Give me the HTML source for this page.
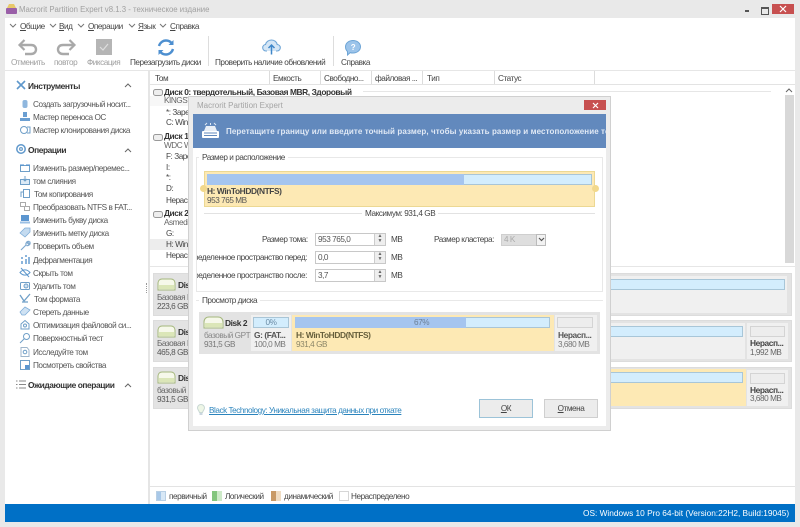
<!DOCTYPE html>
<html lang="ru"><head><meta charset="utf-8"><title>Macrorit Partition Expert</title>
<style>
html,body{margin:0;padding:0;width:800px;height:527px;overflow:hidden;background:#e9e9e9}
body{position:relative;font:8.2px/12px "Liberation Sans",sans-serif;letter-spacing:-.45px;color:#444}
.a,.t,.s{position:absolute}
.t{white-space:nowrap;height:12px;margin-top:1px}
.b{font-weight:bold;color:#333;font-size:8.4px;letter-spacing:-.42px}
.g{color:#888}
.li{color:#555}
.h{font-weight:bold;color:#333;font-size:8.4px;letter-spacing:-.42px}
svg{position:absolute;overflow:visible}
.ic{fill:none;stroke:#6f9fc8;stroke-width:1}
.col{position:absolute;top:71px;width:1px;height:13px;background:#dcdcdc}
.inp{position:absolute;left:315px;width:71px;height:13px;border:1px solid #c8c8c8;background:#fff;box-sizing:border-box;line-height:11px;padding-left:2px;color:#555}
.spin{position:absolute;right:0;top:0;width:10px;height:11px;background:#eee;border-left:1px solid #ccc;color:#666;font-size:5px;line-height:5px;text-align:center;letter-spacing:0}
.btn{position:absolute;top:399px;height:19px;box-sizing:border-box;background:#ececec;text-align:center;line-height:17px;color:#444}
.card{position:absolute;background:#e3e3e3;border:1px solid #dcdcdc;box-sizing:border-box}
u{text-decoration:underline}
</style></head><body>

<!-- main white -->
<div class="a" style="left:5px;top:18px;width:790px;height:486px;background:#fff"></div>
<!-- title bar -->
<svg style="left:6px;top:4px" width="11" height="10"><path d="M1 4L3 0H8L10 4Z" fill="#e8c86a"/><rect x="0" y="4" width="11" height="6" rx="1" fill="#9a5fa8"/></svg>
<div class="t" style="left:19px;top:3px;color:#a0a0a0;font-size:7.8px;letter-spacing:0">Macrorit Partition Expert v8.1.3 - техническое издание</div>
<div class="a" style="left:745px;top:10px;width:4px;height:2px;background:#555"></div>
<div class="a" style="left:761px;top:7px;width:6px;height:5px;border:1px solid #555;border-top-width:2px;box-sizing:content-box"></div>
<div class="a" style="left:772px;top:4px;width:22px;height:10px;background:#c75050"></div>
<svg style="left:780px;top:6px" width="6" height="6"><path d="M0 0L6 6M6 0L0 6" stroke="#fff" stroke-width="1.2"/></svg>

<!-- menu -->
<svg style="left:10px;top:24px" width="160" height="5" fill="none" stroke="#777"><path d="M0 0L3 3L6 0M40 0L43 3L46 0M68 0L71 3L74 0M119 0L122 3L125 0M150 0L153 3L156 0"/></svg>
<div class="t" style="left:20px;top:20px"><u>О</u>бщие</div>
<div class="t" style="left:59px;top:20px"><u>В</u>ид</div>
<div class="t" style="left:88px;top:20px"><u>О</u>перации</div>
<div class="t" style="left:138px;top:20px"><u>Я</u>зык</div>
<div class="t" style="left:170px;top:20px"><u>С</u>правка</div>

<!-- toolbar -->
<svg style="left:18px;top:39px" width="20" height="17" fill="none" stroke="#a9a9a9" stroke-width="2.4"><path d="M2 6H13C16.500 6 18 8 18 10.500C18 13 16 15 13 15H7"/><path d="M6.500 1L1.500 6L6.500 11" stroke-width="2.2"/></svg>
<svg style="left:56px;top:39px" width="20" height="17" fill="none" stroke="#a9a9a9" stroke-width="2.4"><path d="M18 6H7C3.500 6 2 8 2 10.500C2 13 4 15 7 15H13"/><path d="M13.500 1L18.500 6L13.500 11" stroke-width="2.2"/></svg>
<svg style="left:96px;top:39px" width="16" height="16"><rect width="16" height="16" fill="#b5b5b5"/><path d="M4 8L7 11L12 5" fill="none" stroke="#dedede" stroke-width="1.2"/></svg>
<svg style="left:157px;top:39px" width="18" height="17" fill="none" stroke="#4d8fd0" stroke-width="2.4"><path d="M2 7C3 3.500 6 1.500 9 1.500C11.500 1.500 13.500 2.500 15 4.500"/><path d="M16 10C15 13.500 12 15.500 9 15.500C6.500 15.500 4.500 14.500 3 12.500"/><path d="M16.500 1V6H11.500Z" fill="#4d8fd0" stroke="none"/><path d="M1.500 16V11H6.500Z" fill="#4d8fd0" stroke="none"/></svg>
<svg style="left:262px;top:39px" width="19" height="16"><path d="M5 12H4C2 12 .7 10.500 .7 8.700C.7 7 2 5.700 3.500 5.500C4 3 6.500 1 9.500 1C12.500 1 14.800 3 15.200 5.500C17 5.700 18.300 7 18.300 8.700C18.300 10.500 17 12 15 12H14" fill="#d4e6f6" stroke="#6ea5d6" stroke-width="1.1"/><path d="M9.500 15.500V6.500M6.500 9L9.500 6L12.500 9" fill="none" stroke="#3f87c9" stroke-width="1.500"/></svg>
<svg style="left:345px;top:40px" width="16" height="16"><path d="M8 .5C12 .5 15.500 3 15.500 6.800C15.500 10.500 12 13 8 13C7 13 6 12.900 5.200 12.600L2.500 15V11.500C1.200 10.400 .5 8.700 .5 6.800C.5 3 4 .5 8 .5Z" fill="#9cc4ea" stroke="#6ea5d6"/><text x="8" y="10" text-anchor="middle" font-size="8" font-family="Liberation Sans" fill="#fff" font-weight="bold">?</text></svg>
<div class="t g" style="left:11px;top:56px;color:#9e9e9e">Отменить</div>
<div class="t g" style="left:54px;top:56px;color:#9e9e9e">повтор</div>
<div class="t g" style="left:87px;top:56px;color:#9e9e9e">Фиксация</div>
<div class="t" style="left:130px;top:56px">Перезагрузить диски</div>
<div class="a" style="left:208px;top:36px;width:1px;height:30px;background:#ddd"></div>
<div class="t" style="left:215px;top:56px">Проверить наличие обновлений</div>
<div class="a" style="left:333px;top:36px;width:1px;height:30px;background:#ddd"></div>
<div class="t" style="left:341px;top:56px">Справка</div>

<!-- sidebar/main split -->
<div class="a" style="left:5px;top:70px;width:790px;height:1px;background:#e6e6e6"></div>
<div class="a" style="left:148px;top:70px;width:2px;height:434px;background:#e5e5e5"></div>
<div class="a" style="left:146px;top:283px;width:1px;height:10px;border-left:1px dotted #999"></div>

<!-- sidebar -->
<svg class="ic" style="left:16px;top:80px" width="10" height="10"><path d="M1 1L9 9M9 1L1 9" stroke="#5f98cc" stroke-width="1.6"/></svg>
<div class="t h" style="left:28px;top:79px">Инструменты</div>
<svg style="left:125px;top:83px" width="6" height="4" fill="none" stroke="#666"><path d="M0 4L3 1L6 4"/></svg>
<svg style="left:20px;top:99px" width="10" height="10"><rect x="2.500" y="1" width="5" height="8" rx="2" fill="#8fb7de"/></svg>
<div class="t li" style="left:33px;top:98px">Создать загрузочный носит...</div>
<svg style="left:20px;top:112px" width="10" height="10"><rect x="3" y="0" width="4" height="5" fill="#6b9fd2"/><rect x="0" y="6" width="10" height="3" fill="#6b9fd2"/></svg>
<div class="t li" style="left:33px;top:111px">Мастер переноса ОС</div>
<svg class="ic" style="left:20px;top:125px" width="10" height="10"><circle cx="4" cy="5" r="3.500"/><path d="M7 2H10V8H7"/></svg>
<div class="t li" style="left:33px;top:124px">Мастер клонирования диска</div>

<svg class="ic" style="left:16px;top:144px" width="10" height="10"><circle cx="5" cy="5" r="4.200" stroke="#5f98cc" stroke-width="1.500"/><circle cx="5" cy="5" r="1.500" fill="#bcd6ee"/></svg>
<div class="t h" style="left:28px;top:143px">Операции</div>
<svg style="left:125px;top:148px" width="6" height="4" fill="none" stroke="#666"><path d="M0 4L3 1L6 4"/></svg>
<svg class="ic" style="left:20px;top:163px" width="10" height="9"><rect x=".5" y="2.500" width="9" height="6"/><path d="M0 2H4M6 2H10" stroke="#4d8fd0"/></svg>
<div class="t li" style="left:33px;top:162px">Изменить размер/перемес...</div>
<svg class="ic" style="left:20px;top:176px" width="10" height="9"><rect x=".5" y="3.500" width="9" height="5" fill="#dceaf6"/><path d="M5 0V5M3 3L5 5L7 3"/></svg>
<div class="t li" style="left:33px;top:175px">том слияния</div>
<svg class="ic" style="left:20px;top:189px" width="10" height="9"><rect x="3.500" y=".5" width="6" height="8"/><path d="M1 8V3H3"/></svg>
<div class="t li" style="left:34px;top:188px">Том копирования</div>
<svg class="ic" style="left:20px;top:202px" width="10" height="9" stroke="#aaa"><rect x=".5" y=".5" width="5" height="4" style="stroke:#aaa"/><rect x="4.500" y="4.500" width="5" height="4" style="stroke:#aaa"/></svg>
<div class="t li" style="left:33px;top:201px">Преобразовать NTFS в FAT...</div>
<svg style="left:20px;top:215px" width="10" height="9"><rect x="1" y="0" width="8" height="6" fill="#5c96d0"/><rect x="0" y="6.500" width="10" height="2" fill="#9cc0e4"/></svg>
<div class="t li" style="left:33px;top:214px">Изменить букву диска</div>
<svg style="left:20px;top:228px" width="10" height="9"><path d="M0 5L5 0H10V4L5 9Z" fill="#c4dbf0" stroke="#7fadd8" stroke-width=".8"/></svg>
<div class="t li" style="left:33px;top:227px">Изменить метку диска</div>
<svg class="ic" style="left:20px;top:241px" width="10" height="9"><path d="M1 9L6 4C5.500 2 7 0 9 .5L7.500 2L8.500 3L10 1.500C10.500 3.500 8.500 5 6.500 4.500" stroke="#7fa9cf" stroke-width="1.200"/></svg>
<div class="t li" style="left:33px;top:240px">Проверить объем</div>
<svg style="left:20px;top:255px" width="10" height="9"><path d="M1 2H3V4H1ZM5 0H7V2H5ZM1 6H3V9H1ZM5 4H7V9H5ZM8 2H10V9H8Z" fill="#8cb5dc"/></svg>
<div class="t li" style="left:33px;top:254px">Дефрагментация</div>
<svg class="ic" style="left:20px;top:268px" width="10" height="9"><path d="M0 4.500C3 1 7 1 10 4.500C7 8 3 8 0 4.500Z" stroke="#5f98cc"/><path d="M1 0L9 9" stroke="#5f98cc"/></svg>
<div class="t li" style="left:33px;top:267px">Скрыть том</div>
<svg class="ic" style="left:20px;top:281px" width="10" height="9"><rect x=".5" y="1.500" width="9" height="7" rx="1"/><circle cx="6" cy="5" r="2" fill="#cfe2f3"/></svg>
<div class="t li" style="left:33px;top:280px">Удалить том</div>
<svg class="ic" style="left:20px;top:294px" width="10" height="9"><path d="M0 1L4 7L10 0M2 8H8" stroke="#6f9fc8" stroke-width="1.300"/></svg>
<div class="t li" style="left:34px;top:293px">Том формата</div>
<svg style="left:20px;top:307px" width="10" height="9"><path d="M0 5L5 0L10 3L5 8H2Z" fill="#cfe2f3" stroke="#7fadd8" stroke-width=".8"/></svg>
<div class="t li" style="left:33px;top:306px">Стереть данные</div>
<svg class="ic" style="left:20px;top:320px" width="10" height="9"><path d="M1 9V4L5 .5L9 4V9Z"/><circle cx="5" cy="5.500" r="1.500"/></svg>
<div class="t li" style="left:33px;top:319px">Оптимизация файловой си...</div>
<svg class="ic" style="left:20px;top:333px" width="10" height="10"><circle cx="6.500" cy="3.500" r="3"/><path d="M4.500 5.500L0 10"/></svg>
<div class="t li" style="left:33px;top:332px">Поверхностный тест</div>
<svg class="ic" style="left:20px;top:347px" width="10" height="10" stroke="#aaa"><path d="M1 .5H7L9 3V9.500H1Z" style="stroke:#9fb6cc"/><circle cx="5" cy="5" r="1.800"/></svg>
<div class="t li" style="left:33px;top:346px">Исследуйте том</div>
<svg class="ic" style="left:20px;top:360px" width="10" height="10"><rect x=".5" y=".5" width="9" height="9"/><rect x="5" y="5" width="4" height="4" fill="#5c96d0" stroke="none"/></svg>
<div class="t li" style="left:33px;top:359px">Посмотреть свойства</div>
<svg style="left:16px;top:380px" width="10" height="9" fill="none" stroke="#888"><path d="M3 1H10M3 4.500H10M3 8H10M0 1H1.500M0 4.500H1.500M0 8H1.500"/></svg>
<div class="t h" style="left:28px;top:378px">Ожидающие операции</div>
<svg style="left:125px;top:383px" width="6" height="4" fill="none" stroke="#666"><path d="M0 4L3 1L6 4"/></svg>

<!-- columns -->
<div class="col" style="left:269px"></div><div class="col" style="left:320px"></div><div class="col" style="left:371px"></div><div class="col" style="left:422px"></div><div class="col" style="left:494px"></div><div class="col" style="left:594px"></div>
<div class="a" style="left:150px;top:84px;width:645px;height:1px;background:#e3e3e3"></div>
<div class="t" style="left:155px;top:72px">Том</div>
<div class="t" style="left:273px;top:72px">Емкость</div>
<div class="t" style="left:324px;top:72px">Свободно...</div>
<div class="t" style="left:375px;top:72px">файловая ...</div>
<div class="t" style="left:427px;top:72px">Тип</div>
<div class="t" style="left:498px;top:72px">Статус</div>

<!-- tree -->
<div class="a" style="left:363px;top:91px;width:408px;height:1px;background:#e6e6e6"></div>
<div class="a" style="left:150px;top:96px;width:40px;height:10px;background:#f7f7f7"></div>
<div class="a" style="left:150px;top:239px;width:40px;height:11px;background:#ededed"></div>
<svg style="left:153px;top:88px" width="10" height="8" fill="#eee" stroke="#999"><rect x=".5" y="1.500" width="9" height="6" rx="2"/></svg>
<div class="t b" style="left:164px;top:85px">Диск 0: твердотельный, Базовая MBR, Здоровый</div>
<div class="t" style="left:164px;top:94px;color:#666">KINGSTON</div>
<div class="t" style="left:166px;top:106px">*: Зарезервировано</div>
<div class="t" style="left:166px;top:116px">C: Windows</div>
<svg style="left:153px;top:133px" width="10" height="8" fill="#eee" stroke="#999"><rect x=".5" y="1.500" width="9" height="6" rx="2"/></svg>
<div class="t b" style="left:164px;top:129px">Диск 1</div>
<div class="t" style="left:164px;top:139px;color:#666">WDC WD</div>
<div class="t" style="left:166px;top:150px">F: Зарезервировано</div>
<div class="t" style="left:166px;top:161px">I:</div>
<div class="t" style="left:166px;top:171px">*:</div>
<div class="t" style="left:166px;top:182px">D:</div>
<div class="t" style="left:166px;top:194px">Нераспределено</div>
<svg style="left:153px;top:210px" width="10" height="8" fill="#eee" stroke="#999"><rect x=".5" y="1.500" width="9" height="6" rx="2"/></svg>
<div class="t b" style="left:164px;top:206px">Диск 2</div>
<div class="t" style="left:164px;top:216px;color:#666">Asmedia</div>
<div class="t" style="left:166px;top:227px">G:</div>
<div class="t" style="left:166px;top:238px">H: WinToHDD</div>
<div class="t" style="left:166px;top:249px">Нераспределено</div>
<!-- scrollbar -->
<svg style="left:786px;top:88px" width="6" height="4" fill="none" stroke="#666"><path d="M0 4L3 1L6 4"/></svg>
<div class="a" style="left:785px;top:95px;width:9px;height:168px;background:#d8d8d8"></div>
<div class="a" style="left:150px;top:266px;width:645px;height:1px;background:#e6e6e6"></div>

<!-- lower cards -->
<div class="card" style="left:153px;top:273px;width:639px;height:43px"></div>
<div class="a" style="left:200px;top:276px;width:587px;height:37px;background:#f0f0f0"></div>
<div class="a" style="left:200px;top:279px;width:585px;height:11px;background:#d3edfd;border:1px solid #a8c6d8;box-sizing:border-box"></div>
<div class="card" style="left:153px;top:320px;width:639px;height:42px"></div>
<div class="a" style="left:200px;top:323px;width:545px;height:36px;background:#f0f0f0"></div>
<div class="a" style="left:200px;top:326px;width:543px;height:11px;background:#d3edfd;border:1px solid #a8c6d8;box-sizing:border-box"></div>
<div class="a" style="left:747px;top:323px;width:41px;height:36px;background:#f0f0f0"></div>
<div class="a" style="left:750px;top:326px;width:35px;height:11px;background:#ededed;border:1px solid #d4d4d4;box-sizing:border-box"></div>
<div class="t b" style="left:750px;top:336px;color:#444">Нерасп...</div>
<div class="t" style="left:750px;top:346px;color:#666">1,992 MB</div>
<div class="card" style="left:153px;top:367px;width:639px;height:42px"></div>
<div class="a" style="left:200px;top:369px;width:546px;height:37px;background:#fde9b4"></div>
<div class="a" style="left:200px;top:372px;width:543px;height:11px;background:#d3edfd;border:1px solid #a8c6d8;box-sizing:border-box"></div>
<div class="a" style="left:747px;top:370px;width:41px;height:36px;background:#f0f0f0"></div>
<div class="a" style="left:750px;top:373px;width:35px;height:11px;background:#ededed;border:1px solid #d4d4d4;box-sizing:border-box"></div>
<div class="t b" style="left:750px;top:383px;color:#444">Нерасп...</div>
<div class="t" style="left:750px;top:392px;color:#666">3,680 MB</div>

<svg style="left:157px;top:278px" width="19" height="13"><path d="M1 12V5C1 2.500 3 1 5 1H14C16 1 18 2.500 18 5V12Z" fill="#f6f8ea" stroke="#a4b77c"/><rect x="2" y="7" width="15" height="4" fill="#dbe6b8"/></svg>
<div class="t b" style="left:178px;top:278px">Dis</div>
<div class="t" style="left:157px;top:291px;color:#666">Базовая MBR</div>
<div class="t" style="left:157px;top:300px;color:#555">223,6 GB</div>
<svg style="left:157px;top:325px" width="19" height="13"><path d="M1 12V5C1 2.500 3 1 5 1H14C16 1 18 2.500 18 5V12Z" fill="#f6f8ea" stroke="#a4b77c"/><rect x="2" y="7" width="15" height="4" fill="#dbe6b8"/></svg>
<div class="t b" style="left:178px;top:325px">Dis</div>
<div class="t" style="left:157px;top:337px;color:#666">Базовая MBR</div>
<div class="t" style="left:157px;top:346px;color:#555">465,8 GB</div>
<svg style="left:157px;top:371px" width="19" height="13"><path d="M1 12V5C1 2.500 3 1 5 1H14C16 1 18 2.500 18 5V12Z" fill="#f6f8ea" stroke="#a4b77c"/><rect x="2" y="7" width="15" height="4" fill="#dbe6b8"/></svg>
<div class="t b" style="left:178px;top:371px">Dis</div>
<div class="t" style="left:157px;top:384px;color:#666">базовый GPT</div>
<div class="t" style="left:157px;top:393px;color:#555">931,5 GB</div>

<!-- legend -->
<div class="a" style="left:150px;top:486px;width:645px;height:1px;background:#e3e3e3"></div>
<div class="a" style="left:156px;top:491px;width:10px;height:10px;background:linear-gradient(90deg,#a8c8e8 50%,#d8e8f6 50%);border:0;outline:1px solid #b8cfe4;outline-offset:-1px"></div>
<div class="t" style="left:169px;top:490px">первичный</div>
<div class="a" style="left:212px;top:491px;width:10px;height:10px;background:linear-gradient(90deg,#84c67e 50%,#cdeac8 50%)"></div>
<div class="t" style="left:225px;top:490px">Логический</div>
<div class="a" style="left:271px;top:491px;width:10px;height:10px;background:linear-gradient(90deg,#c99a66 50%,#f0dcc2 50%)"></div>
<div class="t" style="left:284px;top:490px">динамический</div>
<div class="a" style="left:339px;top:491px;width:10px;height:10px;background:#fff;border:1px solid #d6d6d6;box-sizing:border-box"></div>
<div class="t" style="left:351px;top:490px">Нераспределено</div>

<!-- status -->
<div class="a" style="left:5px;top:504px;width:790px;height:18px;background:#0070c6"></div>
<div class="t" style="left:583px;top:506px;color:#fff;font-size:8.3px;letter-spacing:0">OS: Windows 10 Pro 64-bit (Version:22H2, Build:19045)</div>

<!-- DIALOG -->
<div class="a" style="left:188px;top:96px;width:423px;height:335px;background:#ececec;border:1px solid #d0d0d0;box-sizing:border-box"></div>
<div class="t" style="left:197px;top:99px;color:#a4a4a4;font-size:8px;letter-spacing:0">Macrorit Partition Expert</div>
<div class="a" style="left:584px;top:100px;width:22px;height:10px;background:#c75050"></div>
<svg style="left:593px;top:103px" width="5" height="5"><path d="M0 0L5 5M5 0L0 5" stroke="#fff" stroke-width="1.200"/></svg>
<div class="a" style="left:193px;top:114px;width:413px;height:312px;background:#fff"></div>
<div class="a" style="left:193px;top:114px;width:413px;height:34px;background:#6289bd;overflow:hidden">
 <svg style="left:8px;top:9px" width="19" height="16"><path d="M3 8L5 3H14L16 8Z" fill="#e8eef6"/><path d="M4 2L6 0M15 2L13 0M9.500 2V0" stroke="#dfe8f4"/><rect x="1" y="8" width="17" height="7" rx="1" fill="#fff"/><path d="M3 10H16M3 12.500H16" stroke="#6289bd"/></svg>
 <div class="t" style="left:33px;top:11px;font-weight:bold;color:#e0e9f5;font-size:8px;letter-spacing:.09px">Перетащите границу или введите точный размер, чтобы указать размер и местоположение тома</div>
</div>

<!-- group 1 -->
<div class="a" style="left:196px;top:157px;width:407px;height:135px;border:1px solid #e8e8e8;box-sizing:border-box"></div>
<div class="t" style="left:199px;top:151px;background:#fff;padding:0 3px">Размер и расположение</div>
<div class="a" style="left:204px;top:171px;width:391px;height:36px;background:#fde9b4;border:1px solid #ecd893;box-sizing:border-box"></div>
<div class="a" style="left:207px;top:174px;width:385px;height:11px;background:#d3edfd;border:1px solid #a9c5d6;box-sizing:border-box"></div>
<div class="a" style="left:207px;top:174px;width:257px;height:11px;background:#a5c5ef"></div>
<div class="a" style="left:200px;top:185px;width:7px;height:7px;border-radius:50%;background:#f2d88c;border:0"></div>
<div class="a" style="left:592px;top:185px;width:7px;height:7px;border-radius:50%;background:#f2d88c"></div>
<div class="t b" style="left:207px;top:184px;color:#444">H: WinToHDD(NTFS)</div>
<div class="t" style="left:207px;top:194px;color:#555">953 765 MB</div>
<div class="a" style="left:204px;top:213px;width:391px;height:1px;background:#e2e2e2"></div>
<div class="t" style="left:362px;top:207px;background:#fff;padding:0 3px">Максимум: 931,4 GB</div>

<div class="t" style="left:262px;top:233px">Размер тома:</div>
<div class="a" style="left:197px;top:251px;width:110px;height:13px;overflow:hidden"><div class="t" style="right:0;top:0">Нераспределенное пространство перед:</div></div>
<div class="a" style="left:197px;top:269px;width:110px;height:13px;overflow:hidden"><div class="t" style="right:0;top:0">Нераспределенное пространство после:</div></div>
<div class="inp" style="top:233px">953 765,0<div class="spin">▲<br>▼</div></div>
<div class="inp" style="top:251px">0,0<div class="spin">▲<br>▼</div></div>
<div class="inp" style="top:269px">3,7<div class="spin">▲<br>▼</div></div>
<div class="t" style="left:391px;top:233px">MB</div>
<div class="t" style="left:391px;top:251px">MB</div>
<div class="t" style="left:391px;top:269px">MB</div>
<div class="t" style="left:434px;top:233px">Размер кластера:</div>
<div class="a" style="left:501px;top:234px;width:45px;height:12px;background:#dedede;border:1px solid #cfcfcf;box-sizing:border-box"></div>
<div class="t" style="left:504px;top:233px;color:#aaa">4 K</div>
<div class="a" style="left:536px;top:234px;width:10px;height:12px;background:#f2f2f2;border:1px solid #bbb;box-sizing:border-box"></div>
<svg style="left:539px;top:238px" width="5" height="4" fill="none" stroke="#555" stroke-width="1.200"><path d="M0 0L2.500 2.500L5 0"/></svg>

<!-- group 2 -->
<div class="a" style="left:196px;top:300px;width:407px;height:1px;background:#e8e8e8"></div>
<div class="t" style="left:199px;top:294px;background:#fff;padding:0 3px">Просмотр диска</div>
<div class="a" style="left:199px;top:312px;width:401px;height:42px;background:#e3e3e3"></div>
<svg style="left:203px;top:316px" width="21" height="13"><path d="M1 12V6C1 3 3 1 6 1H15C18 1 20 3 20 6V12Z" fill="#f6f8ea" stroke="#a4b77c"/><rect x="2" y="7" width="17" height="4" fill="#dbe6b8"/></svg>
<div class="t b" style="left:225px;top:316px">Disk 2</div>
<div class="t" style="left:204px;top:329px;color:#888">базовый GPT</div>
<div class="t" style="left:204px;top:338px;color:#777">931,5 GB</div>
<div class="a" style="left:251px;top:315px;width:40px;height:36px;background:#f0f0f0"></div>
<div class="a" style="left:253px;top:317px;width:36px;height:11px;background:#d3edfd;border:1px solid #a9c5d6;box-sizing:border-box;text-align:center;line-height:9px;color:#6b8ba5">0%</div>
<div class="t b" style="left:254px;top:328px;color:#555">G: (FAT...</div>
<div class="t" style="left:254px;top:338px;color:#777">100,0 MB</div>
<div class="a" style="left:292px;top:315px;width:262px;height:36px;background:#fde9b4"></div>
<div class="a" style="left:295px;top:317px;width:255px;height:11px;background:#d3edfd;border:1px solid #a9c5d6;box-sizing:border-box"></div>
<div class="a" style="left:295px;top:317px;width:171px;height:11px;background:#a5c5ef"></div>
<div class="t" style="left:414px;top:316px;color:#6b7f95">67%</div>
<div class="t b" style="left:296px;top:328px;color:#665f3c">H: WinToHDD(NTFS)</div>
<div class="t" style="left:296px;top:338px;color:#8b8668">931,4 GB</div>
<div class="a" style="left:555px;top:315px;width:42px;height:36px;background:#f0f0f0"></div>
<div class="a" style="left:557px;top:317px;width:36px;height:11px;background:#ededed;border:1px solid #d4d4d4;box-sizing:border-box"></div>
<div class="t b" style="left:558px;top:328px;color:#555">Нерасп...</div>
<div class="t" style="left:558px;top:338px;color:#777">3,680 MB</div>

<!-- footer -->
<svg style="left:197px;top:404px" width="8" height="12"><path d="M4 .5C6 .5 7.500 2 7.500 4C7.500 5.500 6 6.500 5.500 8.500H2.500C2 6.500 .5 5.500 .5 4C.5 2 2 .5 4 .5Z" fill="#eef6e6" stroke="#c9d8d4"/><path d="M2.500 10H5.500" stroke="#b9c9d6" stroke-width="1.500"/></svg>
<div class="t" style="left:209px;top:404px;color:#2b84bd;text-decoration:underline">Black Technology: Уникальная защита данных при откате</div>
<div class="btn" style="left:479px;width:54px;border:1px solid #9cc3d8"><u>О</u>К</div>
<div class="btn" style="left:544px;width:54px;border:1px solid #cfcfcf"><u>О</u>тмена</div>
</body></html>
